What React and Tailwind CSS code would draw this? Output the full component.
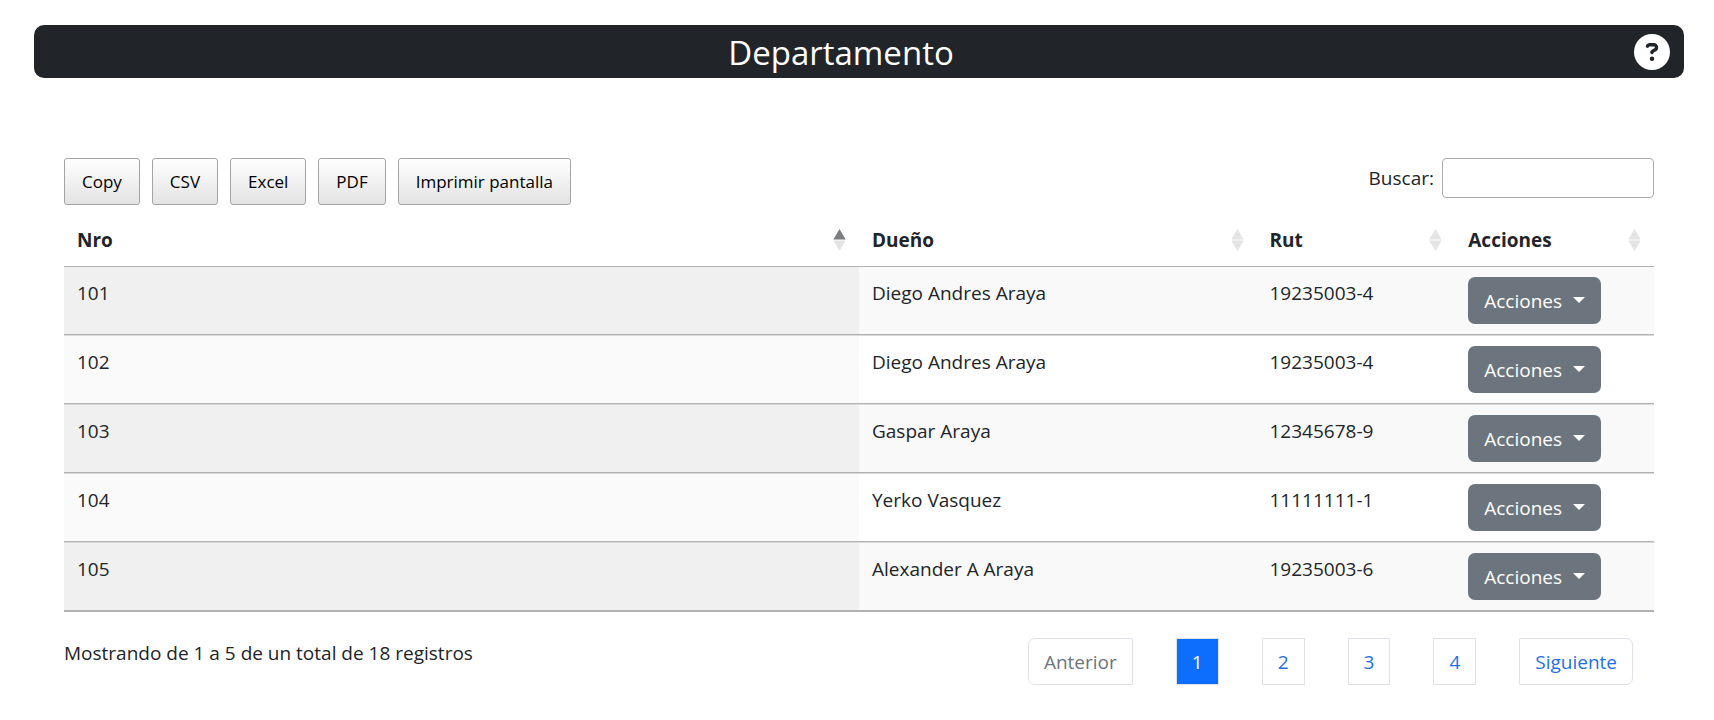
import { useState } from "react";
import { FaCircleQuestion } from "react-icons/fa6";

const rows = [
  { nro: "101", owner: "Diego Andres Araya", rut: "19235003-4" },
  { nro: "102", owner: "Diego Andres Araya", rut: "19235003-4" },
  { nro: "103", owner: "Gaspar Araya", rut: "12345678-9" },
  { nro: "104", owner: "Yerko Vasquez", rut: "11111111-1" },
  { nro: "105", owner: "Alexander A Araya", rut: "19235003-6" },
];

const columns = [
  { label: "Nro", width: "w-1/2", sorted: true },
  { label: "Dueño", width: "w-1/4" },
  { label: "Rut", width: "w-1/8" },
  { label: "Acciones", width: "w-1/8" },
];

const cell = "border-b border-[#b2b2b2] px-[13px] group-not-first:border-t group-not-first:border-t-[#d9d9d9]";

function SortIcon({ sorted }) {
  return (
    <svg viewBox="0 0 13 22" className="h-[22px] w-[13px]" aria-hidden="true">
      <path d="M6.5 0 12.7 10.6H.3z" fill={sorted ? "#7c7e80" : "#e4e4e5"} />
      <path d="M6.5 22 12.7 11.6H.3z" fill="#e4e4e5" />
    </svg>
  );
}

function PageButton({ children, className = "" }) {
  return (
    <button type="button" className={`border border-[#dee2e6] px-[15px] pt-[9px] pb-2 leading-7 ${className}`}>
      {children}
    </button>
  );
}

export default function App() {
  const [query, setQuery] = useState("");

  return (
    <div className="px-[30px] pt-[25px] pb-8 pl-[34px] font-['Open_Sans','Noto_Sans',sans-serif] text-[19px] leading-[30px] text-[#212529]">
      <header className="flex items-center rounded-[10px] bg-[#212529] px-[14px] py-1">
        <h1 className="flex-1 pt-[2px] text-center text-[33px] leading-[43px] text-white">Departamento</h1>
        <button type="button" aria-label="Ayuda" className="text-white">
          <FaCircleQuestion className="block size-9" aria-hidden="true" />
        </button>
      </header>

      <main className="px-[30px] pt-20">
        <div className="flex items-start justify-between">
          <div className="flex gap-3 text-[17px] text-black">
            {["Copy", "CSV", "Excel", "PDF", "Imprimir pantalla"].map((label) => (
              <button
                key={label}
                type="button"
                className="rounded-[3px] border border-[#a3a3a3] bg-linear-to-b from-white to-[#e3e3e3] px-[17px] py-2 leading-[29px]"
              >
                {label}
              </button>
            ))}
          </div>
          <div className="flex items-center gap-2">
            <label htmlFor="search">Buscar:</label>
            <input
              id="search"
              type="search"
              value={query}
              onChange={(e) => setQuery(e.target.value)}
              className="h-10 w-[212px] rounded border border-[#aaaaaa] px-2 outline-none"
            />
          </div>
        </div>

        <table className="mt-[9px] w-full table-fixed border-separate border-spacing-0 border-b border-[#b2b2b2] text-left">
          <thead>
            <tr>
              {columns.map((c) => (
                <th key={c.label} className={`${c.width} border-b border-[#b2b2b2] px-[13px] py-[11px] font-bold`}>
                  <div className="flex items-center justify-between">
                    {c.label}
                    <SortIcon sorted={c.sorted} />
                  </div>
                </th>
              ))}
            </tr>
          </thead>
          <tbody>
            {rows.map((r) => (
              <tr key={r.nro} className="group align-top odd:bg-[#f9f9f9]">
                <td className={`${cell} bg-[#fafafa] py-[11px] group-odd:bg-[#f0f0f0]`}>{r.nro}</td>
                <td className={`${cell} py-[11px]`}>{r.owner}</td>
                <td className={`${cell} py-[11px]`}>{r.rut}</td>
                <td className={`${cell} py-[10px]`}>
                  <button type="button" className="flex items-center gap-[11px] rounded-[7px] bg-[#6c757d] px-4 pt-[10px] pb-2 leading-[29px] text-white">
                    Acciones
                    <svg viewBox="0 0 12 6" className="mb-1 h-[6px] w-3" aria-hidden="true">
                      <path d="M0 0h12L6 6z" fill="currentColor" />
                    </svg>
                  </button>
                </td>
              </tr>
            ))}
          </tbody>
        </table>

        <div className="flex items-start justify-between pt-[26px] pr-[21px]">
          <p>Mostrando de 1 a 5 de un total de 18 registros</p>
          <nav aria-label="Paginación" className="flex gap-[43px] text-[#1f6fe5]">
            <PageButton className="rounded-l-[7px] text-[#6c757d]">Anterior</PageButton>
            <PageButton className="border-[#0d6efd] bg-[#0d6efd] text-white">1</PageButton>
            <PageButton>2</PageButton>
            <PageButton>3</PageButton>
            <PageButton>4</PageButton>
            <PageButton className="rounded-r-[7px]">Siguiente</PageButton>
          </nav>
        </div>
      </main>
    </div>
  );
}
